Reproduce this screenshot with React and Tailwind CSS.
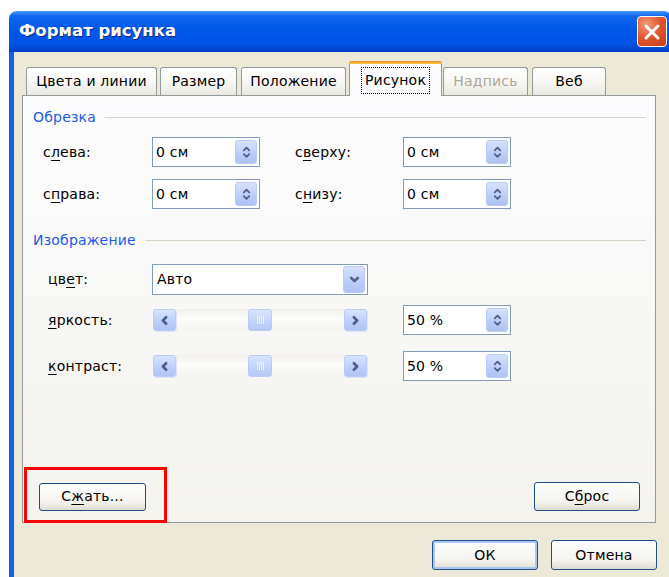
import React from "react";

const FONT = { fontFamily: '"DejaVu Sans", "Liberation Sans", sans-serif' };

function Acc({ children }) {
  return <span className="underline decoration-1 underline-offset-[3px]">{children}</span>;
}

function Chevron({ dir, size = 10, stroke = "#4D6185", width = 2.2 }) {
  const pts = {
    up: "2,7 5,4 8,7",
    down: "2,3.5 5,6.5 8,3.5",
    left: "6.5,2 3.5,5 6.5,8",
    right: "3.5,2 6.5,5 3.5,8",
  }[dir];
  return (
    <svg width={size} height={size} viewBox="0 0 10 10">
      <polyline points={pts} fill="none" stroke={stroke} strokeWidth={width} strokeLinecap="round" strokeLinejoin="round" />
    </svg>
  );
}

function SpinButtons() {
  return (
    <div className="flex h-[24px] w-[22px] flex-col items-center justify-center rounded-[3px] border border-[#b9cbf6] bg-[linear-gradient(to_bottom,#d6e2fd,#bccefa_55%,#aec3f4)]">
      <div className="-mb-[1px]"><Chevron dir="up" size={9} width={2} /></div>
      <div className="-mt-[1px]"><Chevron dir="down" size={9} width={2} /></div>
    </div>
  );
}

function SpinBox({ value }) {
  return (
    <div className="flex h-[30px] w-[108px] items-center border border-[#7f9db9] bg-white pl-[3px] pr-[2px]">
      <span className="flex-1 text-black">{value}</span>
      <SpinButtons />
    </div>
  );
}

function ArrowButton({ dir }) {
  return (
    <div className="flex h-[22px] w-[23px] items-center justify-center rounded-[3px] border border-[#b9cbf6] bg-[linear-gradient(to_bottom,#d8e4fe,#bdcffb_55%,#b0c5f5)] shadow-[1px_1px_0_#dfe6f3]">
      <Chevron dir={dir} size={11} width={2.4} />
    </div>
  );
}

function ScrollBar() {
  return (
    <div className="flex h-[22px] w-[214px] items-center bg-[linear-gradient(to_bottom,#f1efe8,#fdfdfb_40%,#f5f4ef)]">
      <ArrowButton dir="left" />
      <div className="flex flex-1 items-center justify-center">
        <div className="flex h-[22px] w-[24px] items-center justify-center gap-[1px] rounded-[3px] border border-[#b9cbf6] bg-[linear-gradient(to_bottom,#d8e4fe,#c3d4fb_55%,#b5c9f6)]">
          <span className="h-[8px] w-[1px] bg-[#eef3fe]" />
          <span className="h-[8px] w-[1px] bg-[#eef3fe]" />
          <span className="h-[8px] w-[1px] bg-[#eef3fe]" />
          <span className="h-[8px] w-[1px] bg-[#eef3fe]" />
        </div>
      </div>
      <ArrowButton dir="right" />
    </div>
  );
}

function GroupHeader({ title, className = "" }) {
  return (
    <div className={"ml-[10px] mr-[9px] flex h-[16px] items-center " + className}>
      <span className="text-[#1a5be6]">{title}</span>
      <div className="ml-[9px] h-[1px] flex-1 bg-[#d6d3c4]" />
    </div>
  );
}

function Button({ children, className = "", primary = false }) {
  return (
    <div
      className={
        "flex items-center justify-center rounded-[3px] border border-[#1f4d86] bg-[linear-gradient(to_bottom,#ffffff,#f4f3ee_70%,#dedbd0)] text-black " +
        (primary ? "shadow-[inset_0_0_0_2px_#a9c6f5] " : "") +
        className
      }
    >
      {children}
    </div>
  );
}

function Tab({ children, className = "", disabled = false }) {
  return (
    <div
      className={
        "flex h-[28px] items-center justify-center rounded-t-[3px] border border-b-0 border-[#919b9c] bg-[linear-gradient(to_bottom,#ffffff,#f6f5f1_60%,#e9e7df)] " +
        (disabled ? "text-[#aca899] " : "text-black ") +
        className
      }
    >
      {children}
    </div>
  );
}

export default function App() {
  return (
    <div className="relative h-[577px] w-[669px] overflow-hidden bg-white text-[14px] tracking-[0.2px]" style={FONT}>
      <div className="ml-[9px] mt-[11px] w-[663px]">
        {/* title bar */}
        <div className="flex h-[41px] items-center rounded-t-[8px] bg-[linear-gradient(to_bottom,#4a98f8_0%,#0f66ee_12%,#0058ea_45%,#0053e5_80%,#0040c4_100%)] pl-[10px] pr-[5px]">
          <span
            className="flex-1 text-[16.5px] font-bold tracking-normal text-white"
            style={{ textShadow: "1px 1px 0 #0b2a8c" }}
          >
            Формат рисунка
          </span>
          <div className="flex h-[31px] w-[30px] items-center justify-center rounded-[4px] border border-white bg-[radial-gradient(circle_at_30%_25%,#f59a7e,#e2582f_45%,#c8391a)]">
            <svg width="18" height="18" viewBox="0 0 18 18">
              <path d="M3 3 L15 15 M15 3 L3 15" stroke="white" strokeWidth="3" strokeLinecap="round" />
            </svg>
          </div>
        </div>

        {/* window body */}
        <div className="h-[530px] border-l-[5px] border-[#1360ec] bg-[#ece9d8] pl-[8px]">
          {/* tab strip */}
          <div className="flex h-[43px] items-end">
            <Tab className="ml-[4px] w-[131px]">Цвета и линии</Tab>
            <Tab className="ml-[3px] w-[77px]">Размер</Tab>
            <Tab className="ml-[4px] w-[105px]">Положение</Tab>
            <div className="relative z-10 -mb-[1px] ml-[3px] flex h-[35px] w-[93px] flex-col rounded-t-[3px] border border-b-0 border-[#919b9c] bg-[#fcfcfe]">
              <div className="-mx-[1px] -mt-[1px] h-[3px] rounded-t-[3px] bg-[linear-gradient(to_bottom,#e68b2c,#ffc73c)]" />
              <div className="flex flex-1 items-start justify-center pt-[3px]">
                <span className="border border-dotted border-black px-[3px] py-[2px] text-black">Рисунок</span>
              </div>
            </div>
            <Tab className="ml-[1px] w-[85px]" disabled>Надпись</Tab>
            <Tab className="ml-[4px] w-[74px]">Веб</Tab>
          </div>

          {/* tab page */}
          <div className="flex h-[428px] w-[634px] flex-col border border-[#919b9c] bg-[linear-gradient(to_bottom,#fcfcfe,#f4f3ee)] pt-[13px] pb-[11px] text-black">
            <GroupHeader title="Обрезка" />

            <div className="ml-[20px] mt-[12px] flex h-[30px] items-center">
              <span className="w-[109px]">с<Acc>л</Acc>ева:</span>
              <SpinBox value="0 см" />
              <span className="ml-[35px] w-[108px]">с<Acc>в</Acc>ерху:</span>
              <SpinBox value="0 см" />
            </div>
            <div className="ml-[20px] mt-[12px] flex h-[30px] items-center">
              <span className="w-[109px]">с<Acc>п</Acc>рава:</span>
              <SpinBox value="0 см" />
              <span className="ml-[35px] w-[108px]">с<Acc>н</Acc>изу:</span>
              <SpinBox value="0 см" />
            </div>

            <GroupHeader title="Изображение" className="mt-[23px]" />

            <div className="ml-[25px] mt-[16px] flex h-[31px] items-center">
              <span className="w-[104px]">цв<Acc>е</Acc>т:</span>
              <div className="flex h-[31px] w-[216px] items-center border border-[#7f9db9] bg-white pl-[4px] pr-[2px]">
                <span className="flex-1">Авто</span>
                <div className="flex h-[27px] w-[22px] items-center justify-center rounded-[3px] border border-[#b9cbf6] bg-[linear-gradient(to_bottom,#d6e2fd,#bccefa_55%,#aec3f4)]">
                  <Chevron dir="down" size={11} width={2.4} />
                </div>
              </div>
            </div>

            <div className="ml-[25px] mt-[10px] flex h-[30px] items-center">
              <span className="w-[105px]"><Acc>я</Acc>ркость:</span>
              <ScrollBar />
              <div className="ml-[36px]"><SpinBox value="50 %" /></div>
            </div>
            <div className="ml-[25px] mt-[16px] flex h-[30px] items-center">
              <span className="w-[105px]"><Acc>к</Acc>онтраст:</span>
              <ScrollBar />
              <div className="ml-[36px]"><SpinBox value="50 %" /></div>
            </div>

            <div className="flex-1" />
            <div className="flex items-center justify-between pl-[16px] pr-[15px]">
              <Button className="h-[28px] w-[107px]">С<Acc>ж</Acc>ать...</Button>
              <Button className="h-[29px] w-[106px]">С<Acc>б</Acc>рос</Button>
            </div>
          </div>

          {/* dialog buttons */}
          <div className="ml-[410px] mt-[17px] flex gap-[13px]">
            <Button primary className="h-[30px] w-[106px]">ОК</Button>
            <Button className="h-[30px] w-[106px]">Отмена</Button>
          </div>
        </div>
      </div>

      {/* red highlight frame */}
      <div className="absolute left-[24px] top-[467px] h-[56px] w-[143px] border-[3px] border-[#ff0000]" />
    </div>
  );
}
